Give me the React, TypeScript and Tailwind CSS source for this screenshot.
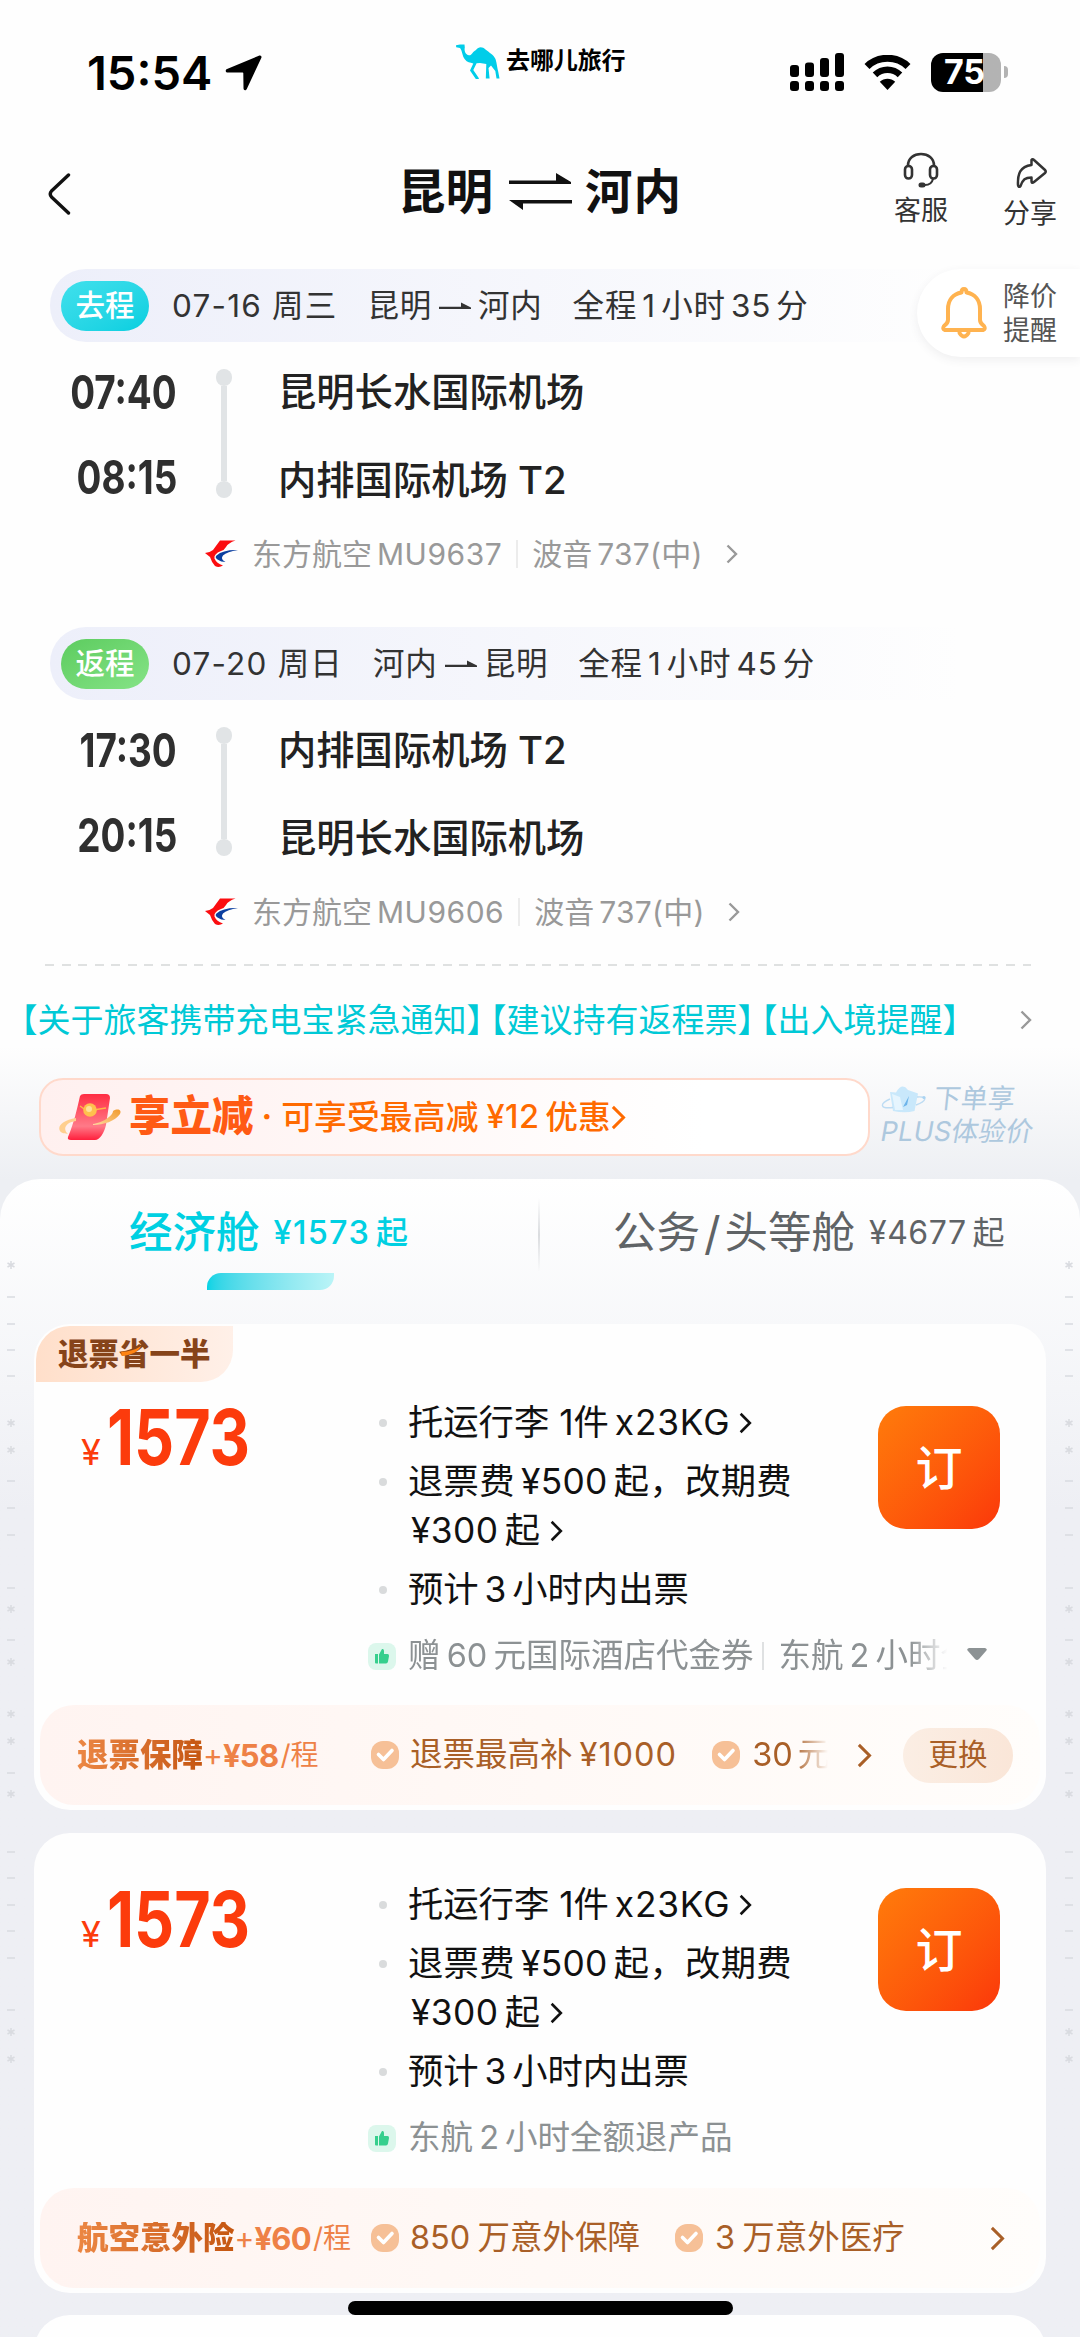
import type { ReactNode } from 'react';

const Chevron = ({ className }: { className: string }) => (
  <svg viewBox="0 0 12 20" fill="none" className={className}>
    <path d="M1.5 1.5 L10 10 L1.5 18.5" stroke="currentColor" strokeWidth="2.4" />
  </svg>
);

const Camel = () => (
  <svg viewBox="0 0 45 36" className="w-[45px] h-[36px] shrink-0" fill="#00cde9">
    <path d="M1 1.2 L5 .4 L9.5 .6 L9.8 3.5 C9 7 10.5 10.5 14 11.3 C17 11.5 17.5 7.5 21 6 C23.5 2.5 27.5 2.5 30.5 5.5 C34 8.5 38.5 10.5 40.5 15 C42 20 42.2 24 43.3 28 L44.5 34.5 L41.5 34.5 L40.3 27 L36 21.5 L33.5 24 L34.6 34.5 L30.8 34.5 L31.3 20 L25 19 L21.6 19.2 L18.3 26 L23.4 33.5 L24 35 L20.8 35 L15 26.5 L18.3 19.5 C15 18.5 12 18.3 10 15.5 C7 12 7.5 7 5 4 L1.2 3.2 Z" />
  </svg>
);

const StatusBar = () => (
  <div className="h-[136px] pt-[42px] flex">
    <div className="w-[455px] pl-[87px] flex h-[60px] items-center">
      <span className="text-[47px] font-semibold leading-none text-black">15:54</span>
      <svg viewBox="0 0 36 36" className="w-[37px] h-[37px] ml-[13px]">
        <path d="M33.5 1.5 C35 1 36 2.5 35.3 4 L21.2 34 C20.3 36 18 35.6 18 33.4 L17.8 18.8 C17.8 18.3 17.6 18.1 17.1 18.1 L2.6 18 C.4 18 0 15.6 2 14.7 Z" fill="#000" />
      </svg>
    </div>
    <div className="w-[335px] flex items-start pt-[2px]">
      <Camel />
      <span className="ml-[6px] mt-[5px] text-[24px] leading-none font-bold tracking-[-0.1px] text-black">去哪儿旅行</span>
    </div>
    <div className="flex h-[60px] items-center">
      <svg viewBox="0 0 54 38" className="w-[54px] h-[38px]" fill="#000">
        <rect x="0" y="12" width="9" height="12" rx="3" />
        <rect x="15" y="9.500" width="9" height="14.500" rx="3" />
        <rect x="30" y="5" width="9" height="19" rx="3" />
        <rect x="45" y="0" width="9" height="24" rx="3" />
        <rect x="0" y="28" width="9" height="10" rx="3" />
        <rect x="15" y="28" width="9" height="10" rx="3" />
        <rect x="30" y="28" width="9" height="10" rx="3" />
        <rect x="45" y="28" width="9" height="10" rx="3" />
      </svg>
      <svg viewBox="0 0 47 35" className="w-[47px] h-[35px] ml-[20px]">
        <path d="M3 11.500 C14 .5 33 .5 44 11.500" stroke="#000" strokeWidth="7" fill="none" />
        <path d="M11 19.800 C18 13 29 13 36 19.800" stroke="#000" strokeWidth="6.500" fill="none" />
        <path d="M15.800 26.800 C20 22.600 27 22.600 31.200 26.800 L23.500 35 Z" fill="#000" />
      </svg>
      <div className="ml-[20px] w-[70px] h-[39px] rounded-[12px] bg-linear-to-r from-black from-[74%] to-[#b3b3b3] to-[74%] flex items-center justify-center">
        <span className="text-[34px] leading-none font-bold text-white mr-[3px]">75</span>
      </div>
      <div className="ml-[3px] w-[4px] h-[12px] rounded-r-full bg-[#b3b3b3]" />
    </div>
  </div>
);

const Header = () => (
  <div className="h-[133px] pl-[46px] flex text-[#111]">
    <svg viewBox="0 0 24 42" className="w-[26px] h-[42px] mt-[37px]" fill="none" stroke="#111" strokeWidth="3.4" strokeLinecap="round" strokeLinejoin="round">
      <path d="M21.500 2 L4.500 18 Q2 21 4.500 24 L21.500 40" />
    </svg>
    <div className="ml-[326px] w-[284px] h-[46px] mt-[33px] flex items-center text-[47.500px] leading-none font-bold">
      <span>昆明</span>
      <svg viewBox="0 0 63 38" className="w-[63px] h-[38px] ml-[16px] mr-[13px]" fill="#111">
        <path d="M0 7.500 H47 V0 L62 9 V11 H0 Z M63 27 H0 L14 37 V30.500 H63 Z" />
      </svg>
      <span className="tracking-[1px]">河内</span>
    </div>
    <div className="ml-[212px] pt-[16px] w-[54px] flex flex-col items-center text-[#333]">
      <svg viewBox="0 0 36 36" className="w-[36px] h-[36px]" fill="none" stroke="#333" strokeWidth="2.600" strokeLinecap="round">
        <path d="M5 13.500 C5 6 11 2 18 2 C25 2 31 6 31 13.500" />
        <rect x="2" y="14" width="7" height="12.500" rx="3.500" />
        <rect x="27" y="14" width="7" height="12.500" rx="3.500" />
        <path d="M30 27 C29 31 26 33 22 33" strokeWidth="2" />
        <rect x="17" y="32" width="4" height="2" rx="1" strokeWidth="3" />
      </svg>
      <span className="mt-[9px] text-[27px] leading-none">客服</span>
    </div>
    <div className="ml-[55px] pt-[21px] w-[54px] flex flex-col items-center text-[#333]">
      <svg viewBox="0 0 32 32" className="w-[32px] h-[32px] ml-[3px]" fill="none" stroke="#333" strokeWidth="2.500" strokeLinejoin="round">
        <path d="M15.500 3 Q16.500 1.500 18 3 L29 13 Q30.500 14.500 29 16 L18 25 Q15.500 27 15.500 24 V20.500 C9 20.500 7 22.500 4.500 29 Q2.500 31 2 28 C1.500 17 4 9.500 15.500 8 Z" />
      </svg>
      <span className="mt-[11px] text-[27px] leading-none">分享</span>
    </div>
  </div>
);

const PriceAlert = () => (
  <div className="absolute right-0 top-0 w-[163px] h-[88px] rounded-l-[44px] bg-white shadow-[0_3px_10px_rgba(60,70,80,0.08)] flex items-center pl-[23px]">
    <svg viewBox="0 0 48 54" className="w-[48px] h-[54px]" fill="none" stroke="#ffb350" strokeWidth="4" strokeLinejoin="round">
      <path d="M24 3 Q26.500 3 26.500 6.500 C35 8 40 14 40 23 V34 Q40 37 44 40 Q46 43 43 44 H5 Q2 43 4 40 Q8 37 8 34 V23 C8 14 13 8 21.500 6.500 Q21.500 3 24 3 Z" />
      <path d="M19.500 47 Q24 54 28.500 47" strokeLinecap="round" />
    </svg>
    <div className="ml-[15px] pt-[2px] text-[27px] leading-[34px] text-[#555]">
      <div>降价</div>
      <div>提醒</div>
    </div>
  </div>
);

const RouteArrow = () => (
  <svg viewBox="0 0 32 10" className="w-[32px] h-[10px] mx-[7px] mt-[2px]" fill="#333">
    <path d="M0 4.800 H22 V.5 L32 5.500 V7 H0 Z" />
  </svg>
);

type Leg = {
  label: string;
  labelClass: string;
  date: string;
  from: string;
  to: string;
  duration: string;
  stops: { time: string; airport: string }[];
  flight: string;
};

const legs: Leg[] = [
  {
    label: '去程',
    labelClass: 'from-[#3fe0ec] to-[#00cfe0]',
    date: '07-16 周三',
    from: '昆明',
    to: '河内',
    duration: '全程 1 小时 35 分',
    stops: [
      { time: '07:40', airport: '昆明长水国际机场' },
      { time: '08:15', airport: '内排国际机场 T2' },
    ],
    flight: 'MU9637',
  },
  {
    label: '返程',
    labelClass: 'from-[#5ccc5f] to-[#85e386]',
    date: '07-20 周日',
    from: '河内',
    to: '昆明',
    duration: '全程 1 小时 45 分',
    stops: [
      { time: '17:30', airport: '内排国际机场 T2' },
      { time: '20:15', airport: '昆明长水国际机场' },
    ],
    flight: 'MU9606',
  },
];

const FlightLeg = ({ leg }: { leg: Leg }) => (
  <section className="h-[358px]">
    <div className="ml-[50px] w-[910px] h-[73px] rounded-l-[36px] bg-linear-to-r from-[#edeffa] to-transparent flex items-center pl-[11px] text-[31.500px] leading-none tracking-[0.8px] text-[#333]">
      <span className={`w-[88px] h-[50px] rounded-[25px] bg-linear-to-br flex items-center justify-center text-[29.500px] tracking-normal text-white font-medium ${leg.labelClass}`}>
        {leg.label}
      </span>
      <span className="ml-[23px] whitespace-pre tracking-[1.200px]">{leg.date}</span>
      <span className="ml-[30px]">{leg.from}</span>
      <RouteArrow />
      <span>{leg.to}</span>
      <span className="ml-[30px] [word-spacing:-4.500px]">{leg.duration}</span>
    </div>
    <div className="flex mt-[27px] h-[129px]">
      <div className="w-[177px] flex flex-col items-end gap-[39px] text-[#2f2f2f]">
        {leg.stops.map((stop) => (
          <span key={stop.time} className="font-bold text-[47px] leading-[46px] origin-right scale-x-[0.785]">
            {stop.time}
          </span>
        ))}
      </div>
      <div className="ml-[39px] w-[16px] h-[129px] flex flex-col items-center">
        <i className="w-[16px] h-[17px] rounded-full bg-[#e1e4e6]" />
        <i className="w-[6px] flex-1 bg-[#e1e4e6]" />
        <i className="w-[16px] h-[17px] rounded-full bg-[#e1e4e6]" />
      </div>
      <div className="ml-[46px] flex flex-col gap-[50px] pt-[4px] text-[#222]">
        {leg.stops.map((stop) => (
          <span key={stop.airport} className="text-[38.300px] leading-[38px] font-medium">
            {stop.airport}
          </span>
        ))}
      </div>
    </div>
    <div className="mt-[40px] h-[32px] pl-[205px] flex items-center text-[30px] leading-none text-[#999]">
      <svg viewBox="0 0 34 28" className="w-[34px] h-[28px]">
        <path d="M15 .5 L30.500 .5 Q23 3 21 7 Q19 10.500 16 11 Q8.500 14 9.500 18.500 Q11.500 23.500 18 25.500 Q14 28 10 26 Q6.500 22 5 17 L0 13 Q5 12.500 8 10 Z" fill="#fb0d10" />
        <path d="M33 10 Q18 9.500 11.500 15.500 Q9.500 17.500 12.500 19.500 Q16 22 20.500 22 Q15 19 18 15.500 Q22 11.500 33 10 Z" fill="#0b3fa0" />
      </svg>
      <span className="ml-[13px]">东方航空</span>
      <span className="ml-[5px] tracking-[0.5px]">{leg.flight}</span>
      <i className="w-[2px] h-[28px] mx-[14px] bg-[#ececec]" />
      <span>波音</span>
      <span className="ml-[5px] tracking-[0.3px]">737(中)</span>
      <Chevron className="w-[12px] h-[20px] ml-[23px]" />
    </div>
  </section>
);

const Notice = () => (
  <div className="h-[40px] mt-[34px] pl-[11px] flex items-center text-[33px] leading-none text-[#00c9d6] whitespace-nowrap">
    <span className="[font-feature-settings:'halt'] ml-[10px]">【关于旅客携带充电宝紧急通知】</span>
    <span className="[font-feature-settings:'halt'] ml-[7px]">【建议持有返程票】</span>
    <span className="[font-feature-settings:'halt'] ml-[7px]">【出入境提醒】</span>
    <Chevron className="w-[12px] h-[20px] ml-auto mr-[48px] text-[#999]" />
  </div>
);

const RedPacket = () => (
  <svg viewBox="0 0 64 48" className="w-[64px] h-[48px]">
    <defs>
      <linearGradient id="packet" x1="0" y1="0" x2="0" y2="1">
        <stop offset="0" stopColor="#ff2d43" />
        <stop offset="0.700" stopColor="#ff7a88" />
        <stop offset="1" stopColor="#ff1f3c" />
      </linearGradient>
      <linearGradient id="ring" x1="0" y1="1" x2="1" y2="0">
        <stop offset="0" stopColor="#ffd9a0" />
        <stop offset="1" stopColor="#f09a2c" />
      </linearGradient>
    </defs>
    <path d="M22 3 Q23 1 26 1 H48 Q52 1 52 5 L48 32 C46 40 42 47 37 47 H13 Q9 47 10 44 C16 30 19 16 22 3 Z" fill="url(#packet)" />
    <path d="M18 25 C5 27 -1 33 2 38 C4 41 7 40 10 41 C4 36 8 29 18 28 Z" fill="#ffcf8e" />
    <path d="M35 31 C44 30 55 23 55 18 C60 15 64 17 62 21 C57 28 46 32 35 32 Z" fill="url(#ring)" />
    <path d="M22 13 L29 18 L48 15" stroke="#ffb648" strokeWidth="1.500" fill="none" />
    <circle cx="32" cy="17" r="6.800" fill="#ffc04d" />
    <circle cx="31" cy="16" r="3" fill="#ffe09a" />
  </svg>
);

const Crown = () => (
  <svg viewBox="0 0 46 28" className="w-[46px] h-[28px]">
    <path d="M9 7 L15 7.500 Q21 -3 27 5 L37 8.500 L33.500 26 Q24 28.500 12 26 Z" fill="#c9e8fb" />
    <path d="M11 9 L19 12 L22 25 L14 25 Z" fill="#e6f5fe" />
    <path d="M22 22 L28 11 L26 20 Z" fill="#6db4ea" />
    <path d="M9 14 C-2 19 -1 24 12 22.500 M36 12 C47 11 46 16 35 20" fill="none" stroke="#bddcf3" strokeWidth="1.400" />
    <circle cx="43" cy="12.500" r="1.600" fill="#a9d3f2" />
  </svg>
);

const Promo = () => (
  <div className="mt-[32px] flex pl-[39px] h-[78px]">
    <div className="w-[831px] h-[78px] rounded-[24px] border-2 border-[#ffd9cb] bg-linear-to-r from-[#fff0ef] to-white to-80% flex items-center pl-[17px] text-[#ff6a00] whitespace-nowrap">
      <RedPacket />
      <span className="ml-[7px] text-[41.500px] leading-none font-black text-[#ff5a14]">享立减</span>
      <span className="ml-[8px] text-[32px] leading-none font-bold">·</span>
      <span className="ml-[9px] text-[32.700px] leading-none font-medium tracking-[0.2px]">可享受最高减</span>
      <span className="ml-[8px] text-[32.500px] leading-none font-medium tracking-[0.4px]">¥12</span>
      <span className="ml-[6px] text-[32.700px] leading-none font-medium">优惠</span>
      <Chevron className="w-[15px] h-[25px]" />
    </div>
    <div className="ml-[11px] pt-[4px] text-[27px] leading-[33px] text-[#adc8de] whitespace-nowrap">
      <div className="flex items-center h-[33px]">
        <Crown />
        <span className="ml-[7px] inline-block -skew-x-6">下单享</span>
      </div>
      <span className="inline-block -skew-x-10 tracking-[0.2px]">PLUS体验价</span>
    </div>
  </div>
);

const Tabs = () => (
  <div className="flex h-[145px] leading-none whitespace-nowrap">
    <div className="w-[538px] pt-[32px]">
      <div className="flex items-center h-[44px] pl-[129px] text-[#00d0e2]">
        <span className="text-[43.500px] font-medium">经济舱</span>
        <span className="ml-[14px] text-[32.500px] font-medium tracking-[1.300px]">¥1573</span>
        <span className="ml-[6px] text-[32px] font-medium">起</span>
      </div>
      <div className="ml-[207px] mt-[18px] w-[127px] h-[17px] rounded-tl-[14px] rounded-br-[14px] bg-linear-to-r from-[#00d3e5] to-[#baf4f7]" />
    </div>
    <div className="w-[2px] h-[74px] mt-[19px] bg-linear-to-b from-transparent via-[#dadcdf] to-transparent" />
    <div className="flex items-center h-[44px] mt-[32px] pl-[73px] text-[#5f6366]">
      <span className="text-[43.500px]">公务</span>
      <span className="text-[46px] mx-[4px]">/</span>
      <span className="text-[43.500px]">头等舱</span>
      <span className="ml-[14px] text-[32px] tracking-[0.5px]">¥4677</span>
      <span className="ml-[6px] text-[32px]">起</span>
    </div>
  </div>
);

// faint pattern running down both page margins
const dashes = [1296, 1323, 1349, 1375, 1480, 1507, 1534, 1587, 1639, 1772, 1851, 1877, 1904, 1930, 1957, 2009];
const stars = [1264, 1422, 1449, 1608, 1661, 1713, 1740, 1793, 2031, 2058];

const MarginPattern = ({ className }: { className: string }) => (
  <svg viewBox="0 1178 10 900" className={`absolute top-0 w-[10px] h-[900px] ${className}`} stroke="#d9dbe0" strokeWidth="1.500">
    {dashes.map((y) => (
      <path key={y} d={`M1 ${y} h8`} />
    ))}
    {stars.map((y) => (
      <path key={y} d={`M5 ${y - 4} v8 M1.500 ${y - 2} l7 4 M8.500 ${y - 2} l-7 4`} />
    ))}
  </svg>
);

const Check = () => (
  <svg viewBox="0 0 28 28" className="w-[28px] h-[28px] shrink-0">
    <rect width="28" height="28" rx="12" fill="#f6c097" />
    <path d="M7.500 13.500 L12.500 18.500 L21 9.500" stroke="#fff" strokeWidth="3.600" fill="none" strokeLinecap="round" strokeLinejoin="round" />
  </svg>
);

const ThumbBadge = () => (
  <span className="w-[28px] h-[27px] rounded-[8px] bg-[#dcf7ec] flex items-center justify-center shrink-0">
    <svg viewBox="0 0 16 16" className="w-[16px] h-[16px]" fill="#36cf8d">
      <path d="M1 6 H4 V15.500 H2 Q1 15.500 1 14.500 Z M5 6.500 L8 1 Q10 .5 10 3 V6 H13.500 Q15.200 6 15 8 L14 13.500 Q13.600 15.500 12 15.500 H5 Z" />
    </svg>
  </span>
);

const Bullet = () => <i className="w-[8px] h-[8px] rounded-full bg-[#d9dbdc] ml-[11px] mr-[21px] shrink-0" />;

type FareCardProps = {
  tag?: ReactNode;
  perks: ReactNode;
  insurance: ReactNode;
  className: string;
};

const FareCard = ({ tag, perks, insurance, className }: FareCardProps) => (
  <article className={`ml-[34px] w-[1012px] rounded-[36px] bg-[#fefefe] flex flex-col ${className}`}>
    {tag}
    <div className="flex h-[305px]">
      <div className="w-[334px] pl-[47px] pt-[25px] flex items-baseline text-[#fc3b0c] h-[84px]">
        <span className="text-[36px] leading-none">¥</span>
        <span className="ml-[6px] font-bold text-[77px] leading-[60px] origin-left scale-x-[0.815]">1573</span>
      </div>
      <div className="w-[510px] text-[35.300px] leading-none text-[#111] whitespace-nowrap [word-spacing:-4px]">
        <div className="flex items-center h-[48px] mt-[17px]">
          <Bullet />
          <span>托运行李</span>
          <span className="ml-[10px]">1件</span>
          <span className="ml-[6px] tracking-[0.8px]">x23KG</span>
          <Chevron className="w-[13px] h-[22px] ml-[9px]" />
        </div>
        <div className="flex items-center h-[48px] mt-[11px]">
          <Bullet />
          <span className="tracking-[0.3px]">退票费 ¥500 起，改期费</span>
        </div>
        <div className="flex items-center h-[48px] mt-[1px] pl-[43px]">
          <span className="tracking-[0.4px]">¥300 起</span>
          <Chevron className="w-[13px] h-[22px] ml-[10px]" />
        </div>
        <div className="flex items-center h-[48px] mt-[11px]">
          <Bullet />
          <span>预计 3 小时内出票</span>
        </div>
        <div className="flex items-center h-[48px] mt-[18px] text-[32.500px] text-[#8c9193] [word-spacing:-3px]">
          <ThumbBadge />
          {perks}
        </div>
      </div>
      <button className="w-[122px] h-[123px] mt-[24px] rounded-[28px] bg-linear-to-br from-[#ff7b0b] to-[#fb360a] text-[47px] leading-none text-white font-medium">
        订
      </button>
    </div>
    <div className="mt-auto mb-[5px] mx-[6px] h-[100px] rounded-[34px] bg-linear-to-r from-[#fff4f1] via-[#fff9f6] to-[#fffdfb] flex items-center pl-[37px] text-[32.500px] leading-none text-[#a95f27] whitespace-nowrap">
      {insurance}
    </div>
  </article>
);

const InsuranceName = ({ name, price }: { name: string; price: string }) => (
  <span className="flex items-center text-[#ee8146]">
    <span className="text-[31.500px] font-black bg-linear-to-r from-[#ec8743] to-[#c5560f] bg-clip-text text-transparent">{name}</span>
    <span className="text-[30px]">+</span>
    <span className="text-[31px] font-bold tracking-[-0.7px]">{price}</span>
    <span className="text-[28px] ml-[2px]">/程</span>
  </span>
);

const App = () => {
  return (
    <div className="relative w-[1080px] h-[2337px] overflow-hidden bg-[#fefefe] font-['Inter','Noto_Sans_CJK_SC',sans-serif]">
      <StatusBar />
      <Header />
      <div className="relative">
        {legs.map((leg) => (
          <FlightLeg key={leg.label} leg={leg} />
        ))}
        <PriceAlert />
      </div>
      <div className="mt-[-21px] ml-[45px] w-[986px] h-[2px] bg-[repeating-linear-gradient(to_right,#dfe1e1_0_9px,transparent_9px_16.570px)]" />
      <div className="flex flex-col">
        <Notice />
      </div>
      <div className="mt-[6px] h-[134px] bg-linear-to-b from-[#fefefe] to-[#edeff3] flex flex-col">
        <Promo />
      </div>
      <main className="relative mt-[-1px] bg-[#edeff3]">
        <div className="rounded-t-[40px] bg-linear-to-b from-white via-[#f4f5f8] via-[210px] to-[#eeeff4] to-[330px] h-[1159px]">
          <MarginPattern className="left-[6px]" />
          <MarginPattern className="right-[6px]" />
          <Tabs />
          <FareCard
            className="relative h-[486px] pt-[58px]"
            tag={
              <div className="absolute top-[2px] left-[2px] w-[197px] h-[56px] rounded-tl-[34px] rounded-br-[32px] bg-linear-to-r from-[#ffdfca] to-[#fff0e8] flex items-center pl-[22px] text-[30.500px] leading-none font-black text-[#86441a]">
                退票省一半
                <svg viewBox="0 0 24 12" className="absolute left-[83px] top-[20px] w-[24px] h-[10px]">
                  <path d="M0 7 Q14 7 24 0 Q20 10 1 12 Z" fill="#ff8412" />
                </svg>
              </div>
            }
            perks={
              <>
                <span className="ml-[12px] w-[545px] shrink-0 flex items-center h-[40px] mask-r-from-92% mask-r-to-99%">
                  <span className="shrink-0">赠 60 元国际酒店代金券</span>
                  <i className="w-[2px] h-[28px] shrink-0 bg-[#dfe1e2] ml-[9px] mr-[14px]" />
                  <span>东航 2 小时全</span>
                </span>
                <svg viewBox="0 0 20 12" className="w-[20px] h-[12px] ml-[14px] mb-[5px] shrink-0" fill="#8c9294">
                  <path d="M2 0 H18 Q21 1 19 3 L12 11 Q10 13 8 11 L1 3 Q-1 1 2 0 Z" />
                </svg>
              </>
            }
            insurance={
              <>
                <div className="w-[294px]">
                  <InsuranceName name="退票保障" price="¥58" />
                </div>
                <Check />
                <span className="ml-[11px]">退票最高补</span>
                <span className="ml-[7px] tracking-[1px]">¥1000</span>
                <div className="ml-[35px] w-[116px] flex items-center mask-r-from-70% mask-r-to-100%">
                  <Check />
                  <span className="ml-[12px]">30</span>
                  <span className="ml-[5px]">元</span>
                </div>
                <Chevron className="w-[15px] h-[25px] ml-[29px] shrink-0" />
                <span className="ml-auto mr-[27px] w-[110px] h-[55px] rounded-[27px] bg-linear-to-r from-[#fbeee4] to-[#fae6d8] flex items-center justify-center text-[29.500px]">
                  更换
                </span>
              </>
            }
          />
          <FareCard
            className="mt-[23px] h-[460px] pt-[31px]"
            perks={<span className="ml-[12px]">东航 2 小时全额退产品</span>}
            insurance={
              <>
                <div className="w-[294px]">
                  <InsuranceName name="航空意外险" price="¥60" />
                </div>
                <Check />
                <span className="ml-[11px] [word-spacing:-2px]">850 万意外保障</span>
                <span className="ml-[35px] flex">
                  <Check />
                </span>
                <span className="ml-[12px] [word-spacing:-2px]">3 万意外医疗</span>
                <Chevron className="w-[15px] h-[25px] ml-auto mr-[35px]" />
              </>
            }
          />
          <div className="ml-[34px] mt-[22px] w-[1012px] h-[60px] rounded-t-[36px] bg-[#fefefe]" />
        </div>
      </main>
      <div className="absolute left-[348px] top-[2301px] w-[385px] h-[14px] rounded-full bg-black" />
    </div>
  );
};

export default App;
